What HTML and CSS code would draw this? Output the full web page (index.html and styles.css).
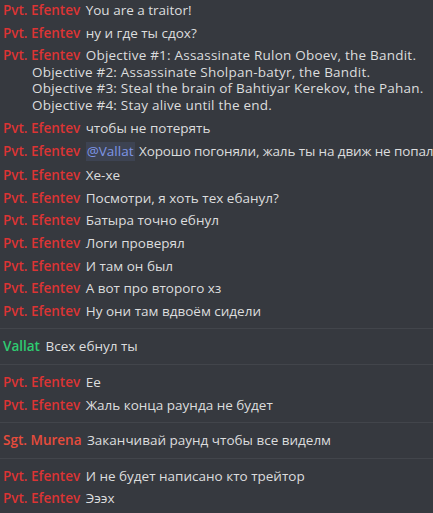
FILE: index.html
```html
<!DOCTYPE html>
<html>
<head>
<meta charset="utf-8">
<link rel="stylesheet" href="styles.css">
</head>
<body>
<div class="chat">
  <div class="group first">
    <div class="msg"><span class="name pvt">Pvt. Efentev</span> You are a traitor!</div>
    <div class="msg"><span class="name pvt">Pvt. Efentev</span> ну и где ты сдох?</div>
    <div class="msg"><span class="name pvt">Pvt. Efentev</span> <span class="latin">Objective #1: Assassinate Rulon Oboev, the Bandit.<br>Objective #2: Assassinate Sholpan-batyr, the Bandit.<br>Objective #3: Steal the brain of Bahtiyar Kerekov, the Pahan.<br>Objective #4: Stay alive until the end.</span></div>
    <div class="msg"><span class="name pvt">Pvt. Efentev</span> чтобы не потерять</div>
    <div class="msg"><span class="name pvt">Pvt. Efentev</span> <span class="mention">@Vallat</span> <span class="tight">Хорошо погоняли, жаль ты на движ не попал</span></div>
    <div class="msg"><span class="name pvt">Pvt. Efentev</span> Хе-хе</div>
    <div class="msg"><span class="name pvt">Pvt. Efentev</span> Посмотри, я хоть тех ебанул?</div>
    <div class="msg"><span class="name pvt">Pvt. Efentev</span> Батыра точно ебнул</div>
    <div class="msg"><span class="name pvt">Pvt. Efentev</span> Логи проверял</div>
    <div class="msg"><span class="name pvt">Pvt. Efentev</span> И там он был</div>
    <div class="msg"><span class="name pvt">Pvt. Efentev</span> А вот про второго хз</div>
    <div class="msg"><span class="name pvt">Pvt. Efentev</span> Ну они там вдвоём сидели</div>
  </div>
  <div class="group">
    <div class="msg"><span class="name vallat">Vallat</span> Всех ебнул ты</div>
  </div>
  <div class="group">
    <div class="msg"><span class="name pvt">Pvt. Efentev</span> Ее</div>
    <div class="msg"><span class="name pvt">Pvt. Efentev</span> Жаль конца раунда не будет</div>
  </div>
  <div class="group">
    <div class="msg"><span class="name sgt">Sgt. Murena</span> Заканчивай раунд чтобы все виделм</div>
  </div>
  <div class="group last">
    <div class="msg"><span class="name pvt">Pvt. Efentev</span> И не будет написано кто трейтор</div>
    <div class="msg"><span class="name pvt">Pvt. Efentev</span> Эээх</div>
  </div>
</div>
</body>
</html>
```
FILE: styles.css
```css
html, body {
  margin: 0;
  padding: 0;
  background: #36393f;
  overflow: hidden;
}
body {
  font-family: "Open Sans", "Noto Sans", sans-serif;
  font-size: 13.5px;
  color: #dcddde;
}
.chat {
  display: flex;
  flex-direction: column;
}
.group {
  padding: 6px 0;
  border-bottom: 1px solid #42454b;
}
.group.first {
  margin-top: -7px;
}
.group.last {
  border-bottom: none;
}
.msg {
  padding: 3px 0 3px 32px;
  text-indent: -29px;
  line-height: 16.6px;
  white-space: nowrap;
}
.name {
  font-weight: 600;
  margin-right: 2px;
}
.latin {
  letter-spacing: 0.22px;
}
.tight {
  letter-spacing: -0.12px;
}
.pvt { color: #dc3434; }
.sgt { color: #e74c3c; }
.vallat { color: #2ecc71; }
.mention {
  display: inline-block;
  text-indent: 0;
  color: #7d95e6;
  background: rgba(114, 137, 218, 0.12);
  padding: 1px 2px 1px 1px;
  line-height: 17px;
  font-weight: 500;
}
```
